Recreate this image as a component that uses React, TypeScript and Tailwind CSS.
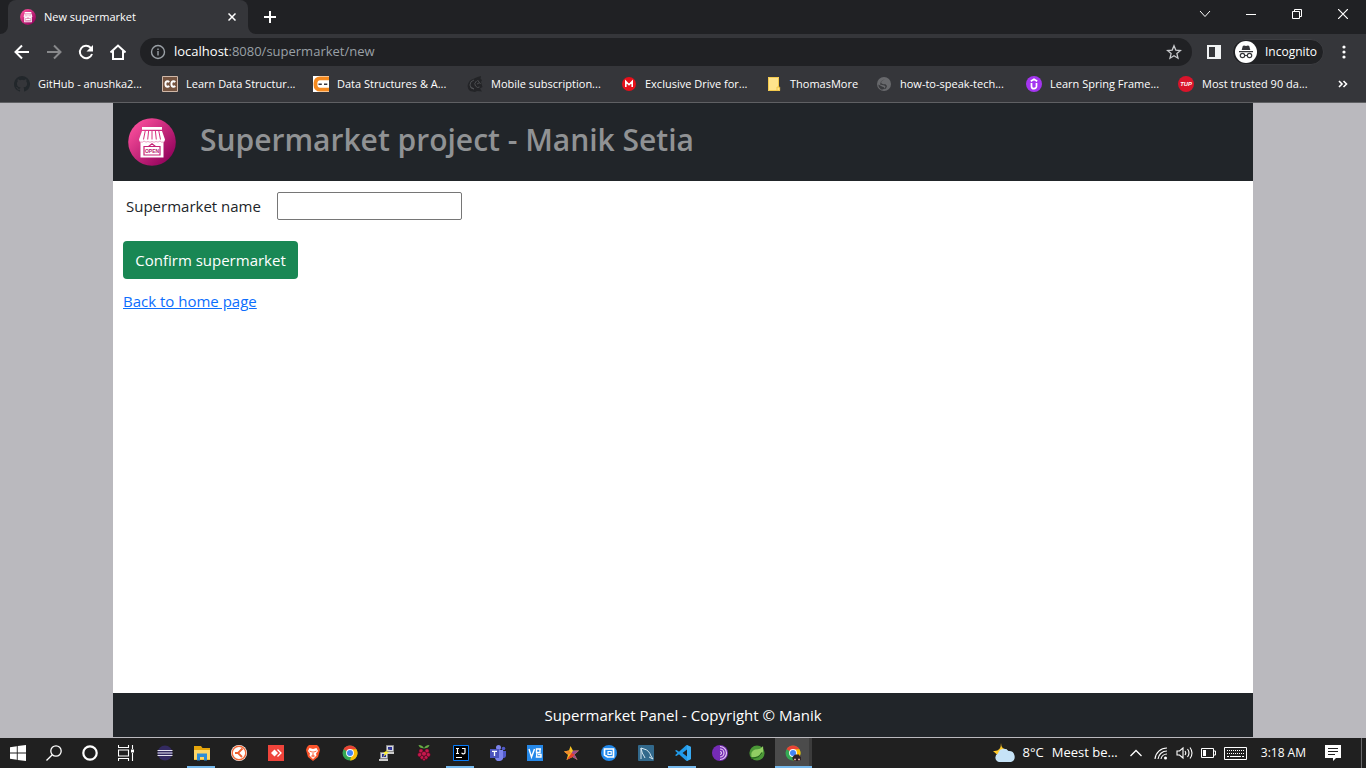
import type { ReactNode } from "react";

const stroke = { fill: "none", stroke: "currentColor" } as const;

function StoreLogo({ className }: { className: string }) {
  return (
    <svg viewBox="0 0 48 48" className={className} aria-hidden="true">
      <defs>
        <linearGradient id="pink" x1="0.1" y1="0.1" x2="0.9" y2="0.9">
          <stop offset="0" stopColor="#fb4f9c" />
          <stop offset="1" stopColor="#90005a" />
        </linearGradient>
      </defs>
      <circle cx="24" cy="24" r="23.8" fill="url(#pink)" />
      <path d="M14 9h20v2.700H14zM12.500 21h23v18.500h-23z" fill="#fff" />
      <path d="M14 13h20l3 8.500q0 2.500-2.200 2.500t-2.500-2q-.5 2-2.800 2t-2.700-2q-.5 2-2.800 2t-2.800-2q-.4 2-2.700 2t-2.800-2q-.3 2-2.500 2T11 21.500z" fill="#fff" />
      <path d="M17.200 13l-1.700 8.500M20.600 13l-.9 8.500M24 13v8.500M27.400 13l.9 8.500M30.800 13l1.700 8.500" stroke="#d8307f" strokeWidth="1" />
      <path d="M12.500 24q2 .8 3.500-1 2 2 4 .5 2 1.500 4 0 2 1.500 4 0 2 1.500 4-.5 1.500 1.800 3.500 1" fill="none" stroke="#e58ab5" strokeWidth=".8" />
      <path d="M16 28.500h16v8.500H16zM20.500 28.500L24 25.800l3.500 2.700" fill="none" stroke="#c52377" strokeWidth="1.200" />
      <text x="24" y="34.700" textAnchor="middle" fontSize="5" fontWeight="700" fill="#b71b6c" fontFamily="Liberation Sans, sans-serif">OPEN</text>
    </svg>
  );
}

const bookmarks: { label: string; width: string; icon: ReactNode }[] = [
  {
    label: "GitHub - anushka2...",
    width: "w-[148px]",
    icon: <path d="M8 0a8 8 0 0 0-2.530 15.590c.4.070.550-.170.550-.380l-.010-1.490c-2.010.370-2.530-.490-2.690-.940-.090-.230-.480-.940-.820-1.130-.280-.150-.680-.520-.010-.530.630-.010 1.080.580 1.230.820.720 1.210 1.870.870 2.330.660.070-.520.280-.870.510-1.070-1.780-.2-3.640-.890-3.640-3.950 0-.870.310-1.590.820-2.150-.080-.2-.360-1.020.080-2.120 0 0 .670-.210 2.200.820a7.420 7.420 0 0 1 4 0c1.530-1.040 2.200-.820 2.200-.820.440 1.100.160 1.920.080 2.120.510.560.820 1.270.820 2.150 0 3.070-1.870 3.750-3.650 3.950.290.250.540.730.540 1.480l-.010 2.200c0 .210.150.460.550.380A8 8 0 0 0 8 0z" fill="#22272b" />,
  },
  {
    label: "Learn Data Structur...",
    width: "w-[151px]",
    icon: (
      <>
        <path d="M.5.500h15v15H.5z" fill="#755440" stroke="#d0b8a8" />
        <path d="M7.300 6Q6.500 5.300 5.400 5.300 3.400 5.300 3.400 8t2 2.700q1.100 0 1.900-.7M13.300 6q-.8-.7-1.900-.7-2 0-2 2.700t2 2.700q1.100 0 1.900-.7" fill="none" stroke="#fff" strokeWidth="1.900" />
      </>
    ),
  },
  {
    label: "Data Structures & A...",
    width: "w-[154px]",
    icon: (
      <>
        <path d="M0 0h16v16H0z" fill="#fff" />
        <path d="M16 2.300H7A4.500 4.500 0 0 0 2.500 7v2A4.500 4.500 0 0 0 7 13.700h9" fill="none" stroke="#f58a1f" strokeWidth="3.800" />
        <path d="M5.500 8.300h3.300M11 8.300h3.300" fill="none" stroke="#37353a" strokeWidth="1.500" />
      </>
    ),
  },
  {
    label: "Mobile subscription...",
    width: "w-[154px]",
    icon: (
      <>
        <path d="M10.500 1L14 0l-.5 3 1.500 1-1 2 1.500 5-2.500 1.500 2 3-5-.5-2 1-5-1Q-.3 12 1 8t5-5z" fill="#232427" />
        <path d="M7 4q-4 1-4 5t4 4M9.500 5q-3 2.500-1 5t4 1M10.500 4l3 4M4 11l3 2M10 8l2-1" fill="none" stroke="#56585b" strokeWidth=".8" />
      </>
    ),
  },
  {
    label: "Exclusive Drive for...",
    width: "w-[145px]",
    icon: (
      <>
        <circle cx="8" cy="8" r="7" fill="#e6101b" />
        <path d="M4.800 11V5.500L8 8.700l3.200-3.200V11" fill="none" stroke="#fff" strokeWidth="1.600" />
      </>
    ),
  },
  {
    label: "ThomasMore",
    width: "w-[110px]",
    icon: (
      <>
        <path d="M2 1h11v10l1 1v3H2z" fill="#ffe48c" />
        <path d="M2.500 1.500h10v9.500h1.200v3.500H2.500zM11 14.500v-3.500h2" fill="none" stroke="#f0c23c" strokeWidth=".8" />
      </>
    ),
  },
  {
    label: "how-to-speak-tech...",
    width: "w-[150px]",
    icon: (
      <>
        <circle cx="8" cy="8" r="7" fill="#68696c" />
        <path d="M9 3L6 4.500 5 7l2 1.200h2.500L11 10l-1 2.500-1.500.8-.5-2L6 10.500 2.300 8.500l.5 2.500L5 13.500h2l2-1.500.5-2-2-.8L4 8.500l1-3z" fill="#393a3d" />
      </>
    ),
  },
  {
    label: "Learn Spring Frame...",
    width: "w-[152px]",
    icon: (
      <>
        <circle cx="8" cy="8" r="8" fill="#a435f0" />
        <path d="M5.500 7v3.200a2.500 2.500 0 0 0 5 0V7M4.800 5.200L8 3.300l3.200 1.900" fill="none" stroke="#fff" strokeWidth="1.700" />
      </>
    ),
  },
  {
    label: "Most trusted 90 da...",
    width: "w-[140px]",
    icon: (
      <>
        <circle cx="8" cy="8" r="8" fill="#d9142b" />
        <text x="8" y="10" textAnchor="middle" fontSize="5.800" fontWeight="700" fontStyle="italic" fill="#fff" fontFamily="Liberation Sans, sans-serif">TUP</text>
      </>
    ),
  },
];

const systemIcons: { name: string; icon: ReactNode }[] = [
  { name: "Start", icon: <path d="M0 2.200L6.800 1.200V7.500H0zM7.700 1.100L16 0v7.500H7.700zM0 8.400h6.800v6.400L0 13.800zM7.700 8.400H16V16l-8.300-1.100z" fill="#fff" /> },
  { name: "Search", icon: <g {...stroke} strokeWidth="1.300"><circle cx="10" cy="6" r="5.200" /><path d="M6.300 9.700L.5 15.500" /></g> },
  { name: "Cortana", icon: <circle cx="8" cy="8" r="6.700" {...stroke} strokeWidth="2.200" /> },
  { name: "Task view", icon: <g {...stroke} strokeWidth="1.100"><path d="M.5 0v2.500h10V0M.5 16v-2.500h10V16M.5 5h10v6H.5zM14.500 0v4M14.500 8v8" /><path d="M13 4.500h3v3h-3z" fill="#fff" stroke="none" /></g> },
];

function ChromeMark() {
  return (
    <>
      <circle cx="8" cy="8" r="7.500" fill="#34a853" />
      <path d="M1.500 4.200a7.500 7.500 0 0 1 13 0L8 8z" fill="#ea4335" />
      <path d="M14.500 4.200A7.500 7.500 0 0 1 8 15.500L10 9V4.200z" fill="#fbbc05" />
      <circle cx="8" cy="8" r="3.900" fill="#fff" />
      <circle cx="8" cy="8" r="3" fill="#4285f4" />
    </>
  );
}

const taskIcons: { name: string; icon: ReactNode; open?: boolean; active?: boolean }[] = [
  { name: "Eclipse", icon: <><circle cx="8" cy="8" r="7.500" fill="#332a60" /><path d="M.5 5.500h15M.5 8h15M.5 10.500h15" stroke="#e4e2ef" strokeWidth="1.100" /></> },
  { name: "File Explorer", open: true, icon: <><path d="M0 1h7l1.500 2H16v12H0z" fill="#e5a50b" /><path d="M0 5h16v9.500H0z" fill="#ffd667" /><path d="M3 15.500V8.500h10v7h-3V12H6v3.500z" fill="#2f8dd8" /></> },
  { name: "Postman", icon: <><circle cx="8" cy="8" r="8" fill="#fff" /><circle cx="8" cy="8" r="6.800" fill="#fff" stroke="#f26b3c" strokeWidth="1.400" /><path d="M11.500 3.500L7 8l4 4M4 8h3" fill="none" stroke="#ef6233" strokeWidth="1.900" /></> },
  { name: "AnyDesk", icon: <><path d="M0 0h16v16H0z" fill="#ef443b" /><path d="M6.500 4.500L10 8l-3.500 3.500L3 8z" fill="#fff" /><path d="M9.500 4.500L13 8l-3.500 3.500" fill="none" stroke="#fff" strokeWidth="1.300" /></> },
  { name: "Brave", icon: <><path d="M4 0h8l2 2 1 3-2 7-5 4-5-4L1 5l1-3z" fill="#fb542b" /><path d="M4.500 3L8 4l3.500-1L13 6l-2 2.500.5 2L8 14l-3.500-3.500.5-2L3 6z" fill="#fff" /><path d="M4.500 6L7 7M11.500 6L9 7M8 6v4L6.500 11 8 12l1.500-1L8 10" fill="none" stroke="#fb542b" strokeWidth=".9" /></> },
  { name: "Chrome", icon: <ChromeMark /> },
  { name: "PuTTY", icon: <><path d="M7.500.500h7v6h-7zM1.500 7.500h7v6h-7z" fill="#d6d8df" stroke="#8a8a8a" /><path d="M9 2h4v3H9zM3 9h4v3H3z" fill="#29309a" /><path d="M8 7h7v2H8zM0 14h9v2H0z" fill="#ccc" /><path d="M12 3L7 7h3l-6 5 2-4H4z" fill="#fff22d" /></> },
  { name: "Raspberry Pi", icon: <><path d="M8 3.500Q3 3 2.500 0 7 0 8 3.500 9 0 13.500 0 13 3 8 3.500" fill="#67ad45" /><g fill="#c7184d" stroke="#3a0b1b" strokeWidth=".6"><circle cx="5" cy="6" r="2.200" /><circle cx="11" cy="6" r="2.200" /><circle cx="3.800" cy="9.800" r="2.200" /><circle cx="12.200" cy="9.800" r="2.200" /><circle cx="8" cy="8.800" r="2.500" /><circle cx="6" cy="12.500" r="2" /><circle cx="10" cy="12.500" r="2" /><circle cx="8" cy="14.500" r="1.400" /></g></> },
  { name: "IntelliJ IDEA", open: true, icon: <><path d="M.5.500h15v15H.5z" fill="#000" stroke="#087cfa" /><path d="M3 3.500h3M4.500 3.500v5M3 8.500h3M9 3.500h3v4q0 1.500-2 1.300L8.500 8M3 12.500h6" fill="none" stroke="#fff" strokeWidth="1.200" /></> },
  { name: "Teams", icon: <><circle cx="8.500" cy="2.500" r="2.500" fill="#7b83eb" /><circle cx="13.500" cy="3.500" r="1.800" fill="#5059c9" /><path d="M5 5h8v6a4 4 0 0 1-8 2z" fill="#7b83eb" /><path d="M13 6h3v5q-.5 2.500-3 2z" fill="#5059c9" /><path d="M0 4h9v9H0z" fill="#4b53bc" /><path d="M2 6.300h5M4.500 6v5" stroke="#fff" strokeWidth="1.300" /></> },
  { name: "VNC Viewer", icon: <><path d="M0 0h16v16H0z" fill="#2588e8" /><path d="M2 4l2.500 8L7.500 4M14 4H9.500v3.500H13V4M10 7.500L9.500 12H14V9.500h-3" fill="none" stroke="#fff" strokeWidth="1.400" /></> },
  { name: "Star", icon: <><path d="M6.500 1L9 5.700l6-.2-4.500 4L13.500 15l-5-3L2.500 15 4 9.700 0 6.500l5-1z" fill="#f8c323" /><path d="M9 5.700l6-.2-4.500 4L13.500 15l-5-3L7.500 8z" fill="#9b4b8f" /><path d="M0 6.500l5-1L7.500 8 4 9.700z" fill="#f08a2c" /><path d="M7.500 8l3 1.500-2 2.500L2.500 15z" fill="#e8402c" /></> },
  { name: "Remote screen", icon: <><circle cx="8" cy="8" r="8" fill="#2189ec" /><path d="M3.500 4h9v8h-6l-3-2z" fill="none" stroke="#fff" strokeWidth="1.700" /><path d="M7 6.500h3.200v3H7z" fill="none" stroke="#fff" strokeWidth="1.200" /></> },
  { name: "MySQL Workbench", icon: <><rect width="16" height="16" rx="1" fill="#32698c" /><path d="M3 14V3l3 1q5 1 7 7l2 3-4-2M3 3q1 6 3 8l1 2" fill="none" stroke="#d5e7f1" strokeWidth="1" /></> },
  { name: "Visual Studio Code", open: true, icon: <><path d="M11.500 0L16 2v12l-4.500 2L4 9.300 1.500 11 0 10.200 2.500 8 0 5.800 1.500 5 4 6.700zM12 4.500L7.500 8l4.500 3.500z" fill="#219bea" fillRule="evenodd" /><path d="M12 0l4 2v12l-4 2z" fill="#38aaf2" /></> },
  { name: "Tor Browser", icon: <><circle cx="8" cy="8" r="8" fill="#752bb6" /><path d="M8 1.500a6.500 6.500 0 0 1 0 13M8 4a4 4 0 0 1 0 8M8 6.500a1.500 1.500 0 0 1 0 3" fill="none" stroke="#e4ccef" strokeWidth="1.200" /></> },
  { name: "Spring Tools", icon: <><circle cx="8" cy="8" r="7.600" fill="#4a9736" /><path d="M14 1Q12 4.500 6 4.500 1 6.500 2.500 12q7 1.500 10.500-3 1.700-3 1-8z" fill="#91ce63" /><path d="M2 13q8 .5 11-5.500" fill="none" stroke="#27671e" strokeWidth="1.300" /></> },
  { name: "Chrome Incognito", active: true, icon: <><ChromeMark /><path d="M10 9.500h4l1 2 1 .5v3l-2 1h-5l-1.500-2V12z" fill="#302225" /><path d="M9 14.500h2M13 14.500h2" stroke="#d7a4a4" strokeWidth="1.500" /></> },
];

function TabStrip() {
  return (
    <div className="flex h-[34px] items-stretch bg-[#202124] pl-2">
      <div className="relative flex w-60 items-center rounded-t-lg bg-[#35363a] pr-2 pl-3">
        <StoreLogo className="size-4" />
        <span className="flex-1 pl-2 text-[11px]">New supermarket</span>
        <button aria-label="Close tab" className="grid size-4 place-items-center">
          <svg viewBox="0 0 8 8" className="size-2" {...stroke} strokeWidth="1.500"><path d="M.5.500l7 7M7.500.500l-7 7" /></svg>
        </button>
        <svg viewBox="0 0 8 8" className="absolute bottom-0 -left-2 size-2"><path d="M8 0v8H0a8 8 0 0 0 8-8" fill="#35363a" /></svg>
        <svg viewBox="0 0 8 8" className="absolute -right-2 bottom-0 size-2"><path d="M0 0v8h8A8 8 0 0 1 0 0" fill="#35363a" /></svg>
      </div>
      <button aria-label="New tab" className="grid w-11 place-items-center">
        <svg viewBox="0 0 12 12" className="size-3" {...stroke} strokeWidth="2"><path d="M6 0v12M0 6h12" /></svg>
      </button>
      <div className="ml-auto flex pb-1.5">
        <button aria-label="Search tabs" className="grid w-[46px] place-items-center">
          <svg viewBox="0 0 12 8" className="h-2 w-3" {...stroke}><path d="M1 1l5 5.500L11 1" /></svg>
        </button>
        <button aria-label="Minimize" className="grid w-[46px] place-items-center">
          <svg viewBox="0 0 10 10" className="size-2.5" {...stroke}><path d="M0 5.500h10" /></svg>
        </button>
        <button aria-label="Restore" className="grid w-[46px] place-items-center">
          <svg viewBox="0 0 10 10" className="size-2.5" {...stroke}><path d="M.5 2.500h7v7h-7zM2.500 2.500v-2h7v7h-2" /></svg>
        </button>
        <button aria-label="Close" className="grid w-[46px] place-items-center">
          <svg viewBox="0 0 10 10" className="size-2.5" {...stroke} strokeWidth="1.200"><path d="M0 0l10 10M10 0L0 10" /></svg>
        </button>
      </div>
    </div>
  );
}

function Toolbar() {
  return (
    <div className="flex h-9 items-center px-3.5">
      <nav className="flex items-center gap-4">
        <button aria-label="Back"><svg viewBox="0 0 16 16" className="size-4" {...stroke} strokeWidth="2"><path d="M15 8H2M8 1.500L1.500 8 8 14.500" /></svg></button>
        <button aria-label="Forward" className="text-[#88898b]"><svg viewBox="0 0 16 16" className="size-4" {...stroke} strokeWidth="2"><path d="M1 8h13M8 1.500L14.500 8 8 14.500" /></svg></button>
        <button aria-label="Reload"><svg viewBox="0 0 16 16" className="size-4" {...stroke} strokeWidth="2"><path d="M14 10A6.200 6.200 0 1 1 12.600 3.700L14 5.200" /><path d="M15 1v6.500H8.500z" fill="currentColor" stroke="none" /></svg></button>
        <button aria-label="Home"><svg viewBox="0 0 16 16" className="size-4" {...stroke} strokeWidth="2"><path d="M.5 8.500L8 1.500l7.500 7M3 7v8h10V7" /></svg></button>
      </nav>
      <div className="ml-3.5 flex h-7 flex-1 items-center rounded-full bg-[#202124] px-2.5">
        <svg viewBox="0 0 16 16" className="size-4 text-[#9aa0a6]" {...stroke} strokeWidth="1.400"><circle cx="8" cy="8" r="6.500" /><path d="M8 7v4.500M8 4.500V6" /></svg>
        <p className="flex-1 pl-2 text-[13px] text-[#9aa0a6]"><span className="text-white">localhost</span>:8080/supermarket/new</p>
        <button aria-label="Bookmark this tab" className="text-[#c8cacd]"><svg viewBox="0 0 16 16" className="size-4" {...stroke} strokeWidth="1.300"><path d="M8 1.800l1.800 4.300 4.700.4-3.600 3.100 1.100 4.600L8 11.800l-4 2.400 1.100-4.600L1.500 6.500l4.700-.4z" /></svg></button>
      </div>
      <button aria-label="Side panel" className="ml-3.5"><svg viewBox="0 0 16 16" className="size-4"><path d="M1 1h14v14H1zM3 3v10h6V3z" fill="#f1f3f4" fillRule="evenodd" /></svg></button>
      <button className="ml-2.5 flex h-[26px] w-[92px] items-center gap-2 rounded-full border border-[#3c3d41] bg-[#202124] pl-0.5">
        <svg viewBox="0 0 22 22" className="size-[22px] shrink-0"><circle cx="11" cy="11" r="11" fill="#fff" /><path d="M7.800 5l1.200-.6 2 .6 2-.6 1.200.6 1.100 4H6.700zM4 10h14v1.200H4z" fill="#35363a" /><path d="M9.700 14.500h2.600" stroke="#35363a" /><g fill="none" stroke="#35363a" strokeWidth="1.200"><circle cx="7.500" cy="14.500" r="2.200" /><circle cx="14.500" cy="14.500" r="2.200" /></g></svg>
        Incognito
      </button>
      <button aria-label="Menu" className="ml-3"><svg viewBox="0 0 16 16" className="size-4" fill="currentColor"><circle cx="8" cy="3" r="1.600" /><circle cx="8" cy="8" r="1.600" /><circle cx="8" cy="13" r="1.600" /></svg></button>
    </div>
  );
}

function Bookmarks() {
  return (
    <nav className="flex h-[33px] border-b border-[#5f6063] pb-1 pl-3.5 text-[11px]">
      {bookmarks.map((b) => (
        <a key={b.label} href="#" className={`flex shrink-0 items-center gap-2 whitespace-nowrap ${b.width}`}>
          <svg viewBox="0 0 16 16" className="size-4 shrink-0">{b.icon}</svg>
          {b.label}
        </a>
      ))}
      <button aria-label="More bookmarks" className="mr-[18px] ml-auto"><svg viewBox="0 0 10 8" className="h-2 w-2.5" {...stroke} strokeWidth="1.600"><path d="M1 1l3 3-3 3M5.500 1l3 3-3 3" /></svg></button>
    </nav>
  );
}

function Page() {
  return (
    <div className="flex flex-1 justify-center bg-[#bab9be] pb-px">
      <div className="flex w-full max-w-[1140px] flex-col bg-white text-[15px] leading-6 text-[#212529]">
        <header className="flex h-[78px] items-center gap-6 bg-[#212529] pl-[15px]">
          <StoreLogo className="size-12" />
          <h1 className="pb-1 text-3xl font-semibold text-[#909294]">Supermarket project - Manik Setia</h1>
        </header>
        <main className="flex-1 px-2.5 pt-[11px]">
          <form onSubmit={(e) => e.preventDefault()}>
            <div className="flex items-center pl-[3px]">
              <label htmlFor="name" className="w-[151px]">Supermarket name</label>
              <input id="name" type="text" className="h-7 w-[185px] rounded-xs border border-[#767676] bg-white px-1" />
            </div>
            <button className="mt-[21px] h-[38px] w-[175px] rounded bg-[#198754] text-white">Confirm supermarket</button>
          </form>
          <a href="#" className="mt-2.5 inline-block text-[#0d6efd] underline">Back to home page</a>
        </main>
        <footer className="flex h-11 items-center justify-center bg-[#212529] text-white">Supermarket Panel - Copyright © Manik</footer>
      </div>
    </div>
  );
}

function Taskbar() {
  return (
    <div className="flex h-[30px] items-stretch bg-[#202020]">
      <div className="flex">
        {systemIcons.map((s) => (
          <button key={s.name} aria-label={s.name} className="grid w-9 place-items-center">
            <svg viewBox="0 0 16 16" className="size-4">{s.icon}</svg>
          </button>
        ))}
      </div>
      <div className="ml-0.5 flex">
        {taskIcons.map((t) => (
          <button key={t.name} aria-label={t.name} className={`relative grid w-[37px] place-items-center ${t.active ? "border-r-3 border-[#3c3c3c] bg-[#4b4b4b] pl-px" : ""}`}>
            <svg viewBox="0 0 16 16" className="size-4">{t.icon}</svg>
            {t.open && <span className="absolute bottom-0 left-1 h-0.5 w-7 bg-[#76b9ed]" />}
            {t.active && <span className="absolute -right-[3px] bottom-0 left-0 h-0.5 bg-[#76b9ed]" />}
          </button>
        ))}
      </div>
      <div className="ml-auto flex items-center">
        <button className="flex items-center gap-2 text-[13px] whitespace-nowrap">
          <svg viewBox="0 0 22 20" className="h-5 w-[22px]">
            <path d="M8 0q0 6 6 6.500-4 8-9 6L0 8q8 1 8-8" fill="#ffc928" />
            <path d="M6 19a4.500 4.500 0 0 1-1-8.500 6 6 0 0 1 10.500-2.500 5.700 5.700 0 0 1 2.500 11z" fill="#c6e3f7" />
          </svg>
          <span>8°C</span>
          <span>Meest be...</span>
        </button>
        <div className="ml-3 flex items-center gap-2">
          <svg viewBox="0 0 12 8" className="mr-1 h-2 w-3" {...stroke} strokeWidth="1.300"><path d="M.5 7L6 1.500 11.500 7" /></svg>
          <svg viewBox="0 0 14 14" className="size-3.5" {...stroke} strokeWidth="1.100"><path d="M1 13A12 12 0 0 1 13 2M4 13a9 9 0 0 1 9-8M7 13a6 6 0 0 1 6-5" /><circle cx="11.500" cy="12" r="1.500" fill="currentColor" stroke="none" /></svg>
          <svg viewBox="0 0 17 14" className="h-3.5 w-[17px]" {...stroke} strokeWidth="1.100"><path d="M1 5h2.500L7 2v10L3.500 9H1zM9 5q1.500 2 0 4M11.500 3q3 4 0 8M14 1.500q4 5.500 0 11" /></svg>
          <svg viewBox="0 0 15 10" className="h-2.5 w-[15px]" {...stroke}><path d="M.5.500h12v9H.5zM13 3h1.500v4H13" /><path d="M2 2h3v6H2z" fill="currentColor" stroke="none" /></svg>
          <svg viewBox="0 0 23 13" className="h-[13px] w-[23px]" {...stroke}><path d="M.5.500h22v12H.5z" /><path d="M3 3.500h17M3 6.500h17" strokeDasharray="1 1" /><path d="M3 9.500h2M6 9.500h11M18 9.500h2" /></svg>
        </div>
        <span className="ml-3.5 whitespace-nowrap">3:18 AM</span>
        <button aria-label="Notifications" className="mr-5 ml-[19px]"><svg viewBox="0 0 16 16" className="size-4"><path d="M0 0h16v13h-5l-3 3v-3H0z" fill="#fff" /><path d="M3 3.500h10M3 6.500h10M3 9.500h7" stroke="#202020" /></svg></button>
        <span className="mr-1 h-full w-px bg-[#68686b]" />
      </div>
    </div>
  );
}

export default function App() {
  return (
    <div className="flex min-h-screen flex-col overflow-hidden bg-[#35363a] font-['Open_Sans',sans-serif] text-xs text-white">
      <TabStrip />
      <Toolbar />
      <Bookmarks />
      <Page />
      <Taskbar />
    </div>
  );
}
